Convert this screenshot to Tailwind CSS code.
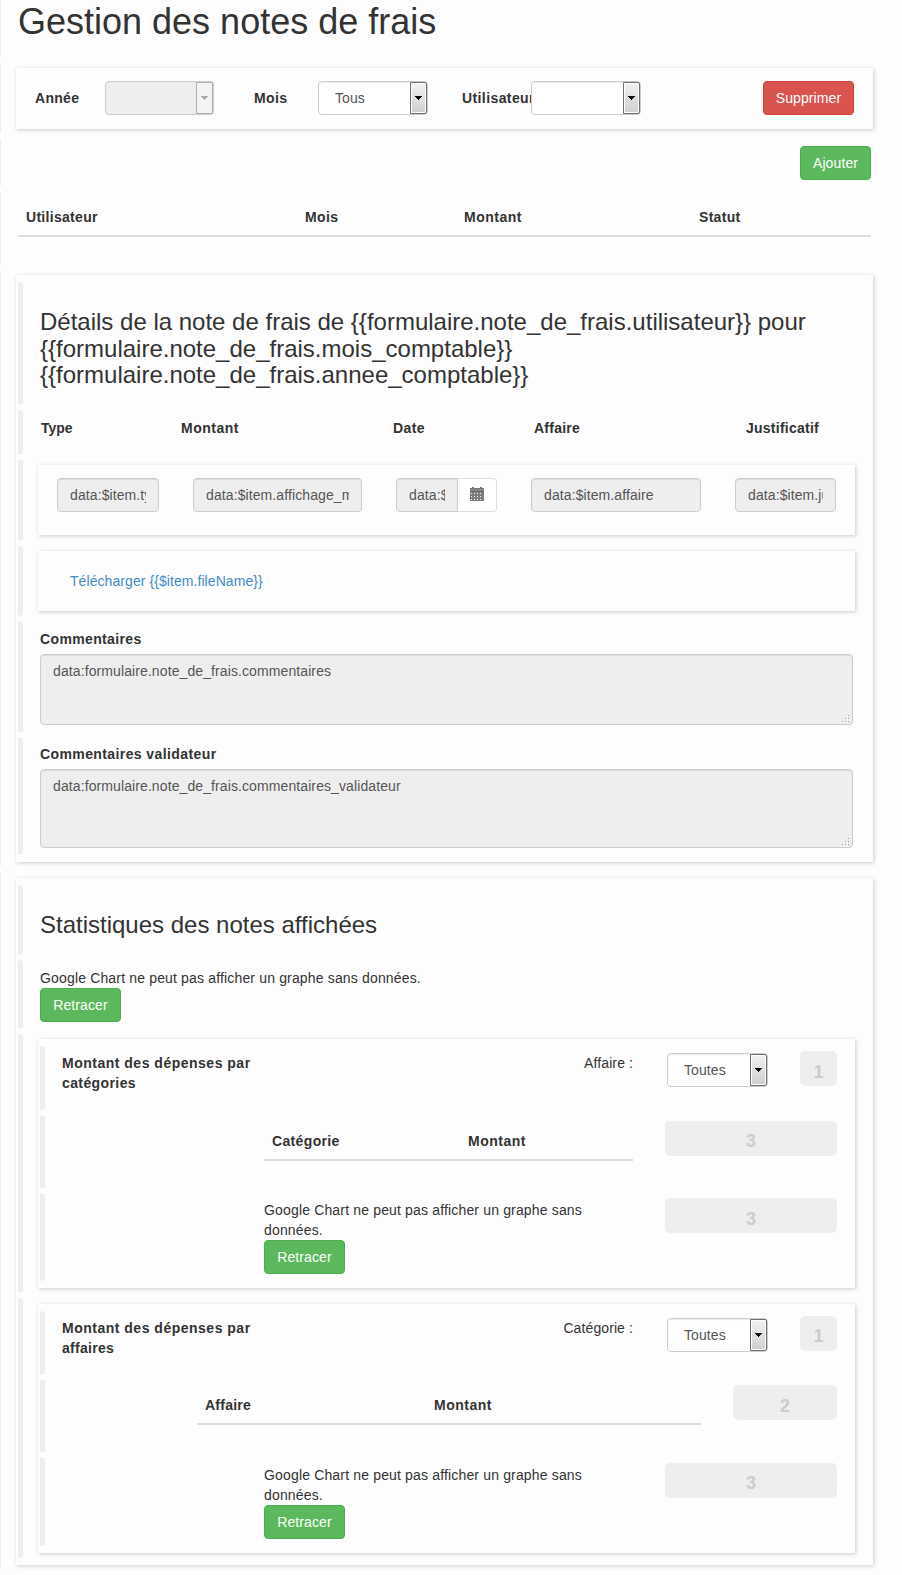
<!DOCTYPE html>
<html lang="fr">
<head>
<meta charset="utf-8">
<title>Gestion des notes de frais</title>
<script src="https://cdn.jsdelivr.net/npm/@tailwindcss/browser@4"></script>
</head>
<body class="bg-[#fdfdfd]">
<main class="w-[902px] h-[1575px] overflow-hidden flex flex-col gap-[7px] font-['Liberation_Sans',Arial,sans-serif] text-[14px] leading-[20px] tracking-[0.1px] text-[#333]">

  <header class="h-[57px] shrink-0 border-l border-[#eee] pl-[17px] pt-[2px]">
    <h1 class="text-[36px] leading-[39.6px] tracking-[0px]">Gestion des notes de frais</h1>
  </header>

  <!-- Filtres -->
  <div class="h-[69px] shrink-0 border-l border-[#eee] pl-[15px] pt-[4px]">
    <div class="w-[857px] h-[61px] shadow-[1px_1px_4px_rgba(0,0,0,0.2)] pt-[13px] pl-[19px] flex items-start">
      <b class="w-[70px] leading-[34px] tracking-[0.3px]">Année</b>
      <div class="w-[109px] h-[34px] rounded-[4px] border border-[#ccc] bg-[#eee] flex justify-end">
        <span class="w-[17px] h-full border border-[#adb2b5] bg-[#f4f4f4] flex items-center justify-center"><svg width="7" height="4" fill="#aaa" shape-rendering="crispEdges"><path d="M0 0h7v1H6v1H5v1H4v1H3V3H2V2H1V1H0z"/></svg></span>
      </div>
      <b class="w-[104px] pl-[40px] leading-[34px] tracking-[0.4px]">Mois</b>
      <div class="w-[110px] h-[34px] rounded-[4px] border border-[#ccc] bg-white shadow-[inset_0_1px_1px_rgba(0,0,0,0.075)] flex justify-between pl-[16px] text-[#555]">
        <span class="leading-[32px]">Tous</span>
        <span class="w-[17px] h-full border border-[#707070] rounded-r-[2px] shadow-[inset_0_0_0_1px_#fcfcfc] bg-linear-to-b from-[#f2f2f2] to-[#cfcfcf] flex items-center justify-center"><svg width="7" height="4" fill="#000" shape-rendering="crispEdges"><path d="M0 0h7v1H6v1H5v1H4v1H3V3H2V2H1V1H0z"/></svg></span>
      </div>
      <b class="w-[103px] pl-[34px] overflow-hidden leading-[34px] tracking-[0.4px]">Utilisateur</b>
      <div class="w-[110px] h-[34px] rounded-[4px] border border-[#ccc] bg-white shadow-[inset_0_1px_1px_rgba(0,0,0,0.075)] flex justify-end">
        <span class="w-[17px] h-full border border-[#707070] rounded-r-[2px] shadow-[inset_0_0_0_1px_#fcfcfc] bg-linear-to-b from-[#f2f2f2] to-[#cfcfcf] flex items-center justify-center"><svg width="7" height="4" fill="#000" shape-rendering="crispEdges"><path d="M0 0h7v1H6v1H5v1H4v1H3V3H2V2H1V1H0z"/></svg></span>
      </div>
      <button class="ml-[122px] w-[91px] h-[34px] rounded-[4px] border border-[#d43f3a] bg-[#d9534f] text-white tracking-[0.1px]">Supprimer</button>
    </div>
  </div>

  <div class="h-[46px] shrink-0 border-l border-[#eee] pt-[6px] pr-[31px] flex justify-end items-start">
    <button class="w-[71px] h-[34px] rounded-[4px] border border-[#4cae4c] bg-[#5cb85c] text-white">Ajouter</button>
  </div>

  <!-- Liste des notes -->
  <div class="h-[71px] shrink-0 border-l border-[#eee] pl-[17px]">
    <div class="w-[853px] h-[44px] border-b-2 border-[#ddd] pt-[14px] pl-[8px] flex font-bold tracking-[0.3px]">
      <span class="w-[279px]">Utilisateur</span><span class="w-[159px] tracking-[0.4px]">Mois</span><span class="w-[235px] tracking-[0.5px]">Montant</span><span>Statut</span>
    </div>
  </div>

  <!-- Détails -->
  <div class="h-[595px] shrink-0 border-l border-[#eee] pl-[15px] pt-[4px]">
    <section class="w-[857px] h-[587px] shadow-[1px_1px_4px_rgba(0,0,0,0.2)] pt-[7px] pl-[2px] flex flex-col gap-[5px]">
      <div class="h-[123px] border-y border-l-5 border-y-transparent border-l-[#eee] pl-[17px] pt-[26.2px]">
        <h2 class="text-[24px] leading-[26.4px] tracking-[0px]">Détails de la note de frais de {{formulaire.note_de_frais.utilisateur}} pour<br>{{formulaire.note_de_frais.mois_comptable}}<br>{{formulaire.note_de_frais.annee_comptable}}</h2>
      </div>
      <div class="h-[45px] border-y border-l-5 border-y-transparent border-l-[#eee] pl-[18px] pt-[7px] flex font-bold tracking-[0.25px]">
        <span class="w-[140px] tracking-[0px]">Type</span><span class="w-[212px] tracking-[0.5px]">Montant</span><span class="w-[141px] tracking-[0.4px]">Date</span><span class="w-[212px]">Affaire</span><span>Justificatif</span>
      </div>
      <div class="h-[81px] border-y border-l-5 border-y-transparent border-l-[#eee] pl-[15px] pt-[4px]">
        <div class="w-[817px] h-[70px] shadow-[1px_1px_4px_rgba(0,0,0,0.2)] pt-[13px] pl-[19px] flex text-[#555] leading-[32px]">
          <div class="w-[102px] h-[34px] rounded-[4px] border border-[#ccc] bg-[#eee] shadow-[inset_0_1px_1px_rgba(0,0,0,0.075)] px-[12px]"><div class="overflow-hidden whitespace-nowrap">data:$item.type</div></div>
          <div class="ml-[34px] w-[169px] h-[34px] rounded-[4px] border border-[#ccc] bg-[#eee] shadow-[inset_0_1px_1px_rgba(0,0,0,0.075)] px-[12px]"><div class="overflow-hidden whitespace-nowrap">data:$item.affichage_montant</div></div>
          <div class="ml-[34px] w-[62px] h-[34px] rounded-l-[4px] border border-[#ccc] bg-[#eee] shadow-[inset_0_1px_1px_rgba(0,0,0,0.075)] px-[12px]"><div class="overflow-hidden whitespace-nowrap">data:$item.date</div></div>
          <div class="w-[39px] h-[34px] rounded-r-[4px] border border-l-0 border-[#ddd] bg-white flex items-start justify-center pt-[8px]">
            <svg width="14" height="14" viewBox="0 0 14 14" shape-rendering="crispEdges"><path fill="#777" d="M0 1h2V0h2v1h6V0h2v1h2v1H0z"/><path fill="#858585" d="M0 2h14v2H0z"/><path fill="#6c6c6c" d="M0 4h14v1H0z"/><path fill="#7c7c7c" fill-rule="evenodd" d="M0 5h14v9H0zM1 6v1h1V6zM4 6v1h1V6zM7 6v1h1V6zM10 6v1h1V6zM1 9v1h1V9zM4 9v1h1V9zM7 9v1h1V9zM10 9v1h1V9zM1 12v1h1v-1zM4 12v1h1v-1zM7 12v1h1v-1zM10 12v1h1v-1z"/></svg>
          </div>
          <div class="ml-[34px] w-[170px] h-[34px] rounded-[4px] border border-[#ccc] bg-[#eee] shadow-[inset_0_1px_1px_rgba(0,0,0,0.075)] px-[12px]"><div class="overflow-hidden whitespace-nowrap">data:$item.affaire</div></div>
          <div class="ml-[34px] w-[101px] h-[34px] rounded-[4px] border border-[#ccc] bg-[#eee] shadow-[inset_0_1px_1px_rgba(0,0,0,0.075)] px-[12px]"><div class="overflow-hidden whitespace-nowrap">data:$item.justificatif</div></div>
        </div>
      </div>
      <div class="h-[70px] border-y border-l-5 border-y-transparent border-l-[#eee] pl-[15px] pt-[4px]">
        <div class="w-[817px] h-[60px] shadow-[1px_1px_4px_rgba(0,0,0,0.2)] pt-[20px] pl-[32px]"><a class="text-[#428bca] tracking-[0.07px]">Télécharger {{$item.fileName}}</a></div>
      </div>
      <div class="h-[111px] border-y border-l-5 border-y-transparent border-l-[#eee] pl-[17px] pt-[7px]">
        <b class="block h-[25px] tracking-[0.36px]">Commentaires</b>
        <div class="w-[813px] h-[71px] rounded-[4px] border border-[#ccc] bg-[#eee] shadow-[inset_0_1px_1px_rgba(0,0,0,0.075)] pt-[6px] pl-[12px] pr-[2px] pb-[1px] text-[#555] flex justify-between">
          <span>data:formulaire.note_de_frais.commentaires</span>
          <svg class="self-end" width="8" height="8" shape-rendering="crispEdges"><path fill="#fff" d="M5 1h1v1H5zM2 4h1v1H2zM5 4h1v1H5zM0 7h1v1H0zM2 7h1v1H2zM5 7h1v1H5z"/><path fill="#999" d="M6 0h1v1H6zM3 3h1v1H3zM6 3h1v1H6zM0 6h1v1H0zM3 6h1v1H3zM6 6h1v1H6z"/></svg>
        </div>
      </div>
      <div class="h-[118px] border-y border-l-5 border-y-transparent border-l-[#eee] pl-[17px] pt-[6px]">
        <b class="block h-[25px] tracking-[0.4px]">Commentaires validateur</b>
        <div class="w-[813px] h-[79px] rounded-[4px] border border-[#ccc] bg-[#eee] shadow-[inset_0_1px_1px_rgba(0,0,0,0.075)] pt-[6px] pl-[12px] pr-[2px] pb-[1px] text-[#555] flex justify-between">
          <span>data:formulaire.note_de_frais.commentaires_validateur</span>
          <svg class="self-end" width="8" height="8" shape-rendering="crispEdges"><path fill="#fff" d="M5 1h1v1H5zM2 4h1v1H2zM5 4h1v1H5zM0 7h1v1H0zM2 7h1v1H2zM5 7h1v1H5z"/><path fill="#999" d="M6 0h1v1H6zM3 3h1v1H3zM6 3h1v1H6zM0 6h1v1H0zM3 6h1v1H3zM6 6h1v1H6z"/></svg>
        </div>
      </div>
    </section>
  </div>

  <!-- Statistiques -->
  <div class="h-[696px] shrink-0 border-l border-[#eee] pl-[15px] pt-[5px]">
    <section class="w-[857px] h-[687px] shadow-[1px_1px_4px_rgba(0,0,0,0.2)] pt-[7px] pl-[2px] flex flex-col gap-[5px]">
      <div class="h-[70px] border-y border-l-5 border-y-transparent border-l-[#eee] pl-[17px] pt-[26px]">
        <h2 class="text-[24px] leading-[26.4px] tracking-[0px]">Statistiques des notes affichées</h2>
      </div>
      <div class="h-[69px] border-y border-l-5 border-y-transparent border-l-[#eee] pl-[17px] pt-[7px]">
        <p class="tracking-[0.16px]">Google Chart ne peut pas afficher un graphe sans données.</p>
        <button class="block w-[81px] h-[34px] rounded-[4px] border border-[#4cae4c] bg-[#5cb85c] text-white">Retracer</button>
      </div>

      <div class="h-[259px] border-y border-l-5 border-y-transparent border-l-[#eee] pl-[15px] pt-[4px]">
        <div class="w-[817px] h-[249px] shadow-[1px_1px_4px_rgba(0,0,0,0.2)] pt-[7px] pl-[2px] flex flex-col gap-[5px]">
          <div class="h-[64px] border-y border-l-5 border-y-transparent border-l-[#eee] pl-[17px] pt-[4px] flex items-start">
            <b class="w-[202px] pt-[2px] tracking-[0.5px]">Montant des dépenses par<br><span class="tracking-[0.4px]">catégories</span></b>
            <span class="w-[369px] pt-[2px] text-right">Affaire :</span>
            <div class="ml-[34px] mt-[2px] w-[101px] h-[34px] rounded-[4px] border border-[#ccc] bg-white shadow-[inset_0_1px_1px_rgba(0,0,0,0.075)] flex justify-between pl-[16px] text-[#555]">
              <span class="leading-[32px]">Toutes</span>
              <span class="w-[17px] h-full border border-[#707070] rounded-r-[2px] shadow-[inset_0_0_0_1px_#fcfcfc] bg-linear-to-b from-[#f2f2f2] to-[#cfcfcf] flex items-center justify-center"><svg width="7" height="4" fill="#000" shape-rendering="crispEdges"><path d="M0 0h7v1H6v1H5v1H4v1H3V3H2V2H1V1H0z"/></svg></span>
            </div>
            <span class="ml-[32px] w-[37px] h-[35px] rounded-[5px] bg-[#eee] text-[#ccc] text-[18px] leading-[43px] font-bold text-center">1</span>
          </div>
          <div class="h-[73px] border-y border-l-5 border-y-transparent border-l-[#eee] pl-[219px] pt-[5px] flex items-start">
            <div class="w-[369px] h-[40px] border-b-2 border-[#ddd] pt-[10px] pl-[8px] flex font-bold tracking-[0.35px]"><span class="w-[196px]">Catégorie</span><span class="tracking-[0.5px]">Montant</span></div>
            <span class="ml-[32px] w-[172px] h-[35px] rounded-[5px] bg-[#eee] text-[#ccc] text-[18px] leading-[41px] font-bold text-center">3</span>
          </div>
          <div class="h-[88px] border-y border-l-5 border-y-transparent border-l-[#eee] pl-[219px] pt-[4px] flex items-start">
            <div class="w-[369px] pt-[2px]">
              <p class="tracking-[0.16px]">Google Chart ne peut pas afficher un graphe sans<br>données.</p>
              <button class="block w-[81px] h-[34px] rounded-[4px] border border-[#4cae4c] bg-[#5cb85c] text-white">Retracer</button>
            </div>
            <span class="ml-[32px] w-[172px] h-[35px] rounded-[5px] bg-[#eee] text-[#ccc] text-[18px] leading-[43px] font-bold text-center">3</span>
          </div>
        </div>
      </div>

      <div class="h-[260px] border-y border-l-5 border-y-transparent border-l-[#eee] pl-[15px] pt-[5px]">
        <div class="w-[817px] h-[249px] shadow-[1px_1px_4px_rgba(0,0,0,0.2)] pt-[7px] pl-[2px] flex flex-col gap-[5px]">
          <div class="h-[64px] border-y border-l-5 border-y-transparent border-l-[#eee] pl-[17px] pt-[4px] flex items-start">
            <b class="w-[202px] pt-[2px] tracking-[0.5px]">Montant des dépenses par<br><span class="tracking-[0.3px]">affaires</span></b>
            <span class="w-[369px] pt-[2px] text-right">Catégorie :</span>
            <div class="ml-[34px] mt-[2px] w-[101px] h-[34px] rounded-[4px] border border-[#ccc] bg-white shadow-[inset_0_1px_1px_rgba(0,0,0,0.075)] flex justify-between pl-[16px] text-[#555]">
              <span class="leading-[32px]">Toutes</span>
              <span class="w-[17px] h-full border border-[#707070] rounded-r-[2px] shadow-[inset_0_0_0_1px_#fcfcfc] bg-linear-to-b from-[#f2f2f2] to-[#cfcfcf] flex items-center justify-center"><svg width="7" height="4" fill="#000" shape-rendering="crispEdges"><path d="M0 0h7v1H6v1H5v1H4v1H3V3H2V2H1V1H0z"/></svg></span>
            </div>
            <span class="ml-[32px] w-[37px] h-[35px] rounded-[5px] bg-[#eee] text-[#ccc] text-[18px] leading-[41px] font-bold text-center">1</span>
          </div>
          <div class="h-[72px] border-y border-l-5 border-y-transparent border-l-[#eee] pl-[152px] pt-[4px] flex items-start">
            <div class="w-[504px] h-[40px] border-b-2 border-[#ddd] pt-[10px] pl-[8px] flex font-bold tracking-[0.25px]"><span class="w-[229px]">Affaire</span><span class="tracking-[0.5px]">Montant</span></div>
            <span class="ml-[32px] w-[104px] h-[35px] rounded-[5px] bg-[#eee] text-[#ccc] text-[18px] leading-[43px] font-bold text-center">2</span>
          </div>
          <div class="h-[89px] border-y border-l-5 border-y-transparent border-l-[#eee] pl-[219px] pt-[5px] flex items-start">
            <div class="w-[369px] pt-[2px]">
              <p class="tracking-[0.16px]">Google Chart ne peut pas afficher un graphe sans<br>données.</p>
              <button class="block w-[81px] h-[34px] rounded-[4px] border border-[#4cae4c] bg-[#5cb85c] text-white">Retracer</button>
            </div>
            <span class="ml-[32px] w-[172px] h-[35px] rounded-[5px] bg-[#eee] text-[#ccc] text-[18px] leading-[41px] font-bold text-center">3</span>
          </div>
        </div>
      </div>
    </section>
  </div>
</main>
</body>
</html>
